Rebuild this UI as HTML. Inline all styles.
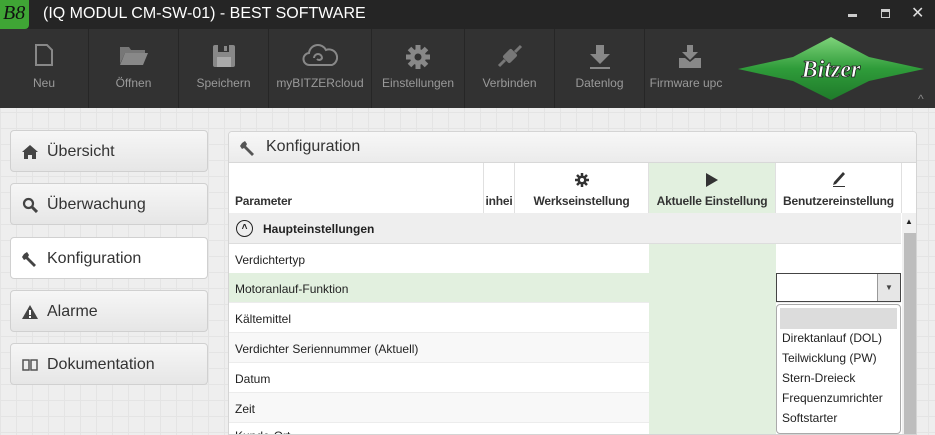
<!DOCTYPE html>
<html><head><meta charset="utf-8"><style>
*{box-sizing:border-box;margin:0;padding:0}
body{width:935px;height:435px;overflow:hidden;font-family:"Liberation Sans",sans-serif;background:#eeeeee;position:relative;
background-image:linear-gradient(#e4e4e4 1px,transparent 1px),linear-gradient(90deg,#e4e4e4 1px,transparent 1px);background-size:16px 16px;}
.abs{position:absolute}
#title{left:0;top:0;width:935px;height:29px;background:#252525;color:#fff;font-size:16px}
#tb{left:0;top:29px;width:935px;height:79px;background:#323232}
.tbtn{position:absolute;top:0;height:79px;border-right:1px solid #262626;color:#9a9a9a;font-size:12px;text-align:center}
.tbtn span{position:absolute;left:0;right:0;top:47px;white-space:nowrap;overflow:hidden}
.tbtn svg{position:absolute;left:50%;top:15px;transform:translateX(-50%)}
.side{position:absolute;left:10px;width:198px;height:42px;border:1px solid #d0d0d0;border-radius:4px;background:linear-gradient(#f6f6f6,#e6e6e6);font-size:16px;color:#333;padding:12px 0 0 36px}
.side svg{position:absolute;left:11px;top:13px}
#panel{left:228px;top:131px;width:689px;height:304px;background:#fff;border:1px solid #d4d4d4;border-radius:4px 4px 0 0;overflow:hidden}
.hdr{font-weight:bold;font-size:12px;color:#333;position:absolute;top:31px;height:50px;border-right:1px solid #e0e0e0;letter-spacing:-0.2px}
.hdr span{position:absolute;bottom:5px;left:0;right:0;text-align:center;white-space:nowrap;overflow:hidden}
.row{position:absolute;left:0;width:672px;height:30px;border-bottom:1px solid #ececec;font-size:12px;color:#222;padding:9px 0 0 6px}
</style></head><body>
<div id="title" class="abs">
 <div class="abs" style="left:0;top:0;width:29px;height:29px;background:#3fa535;border-radius:0 0 4px 0;color:#111;font-family:'Liberation Serif',serif;font-style:italic;font-size:20px;padding:2px 0 0 3px">B8</div>
 <div class="abs" style="left:43px;top:5px">(IQ MODUL CM-SW-01) - BEST SOFTWARE</div>
 <div class="abs" style="left:848px;top:14px;width:9px;height:3px;background:#ccc"></div>
 <div class="abs" style="left:881px;top:9px;width:9px;height:9px;border:1px solid #ccc;border-top-width:3px"></div>
 <div class="abs" style="left:911px;top:3px;color:#ddd;font-size:16px">✕</div>
</div>
<div id="tb" class="abs">
 <div class="tbtn" style="left:0;width:89px"><svg width="20" height="22"><path d="M2 1h11l5 5v15H2z" fill="none" stroke="#888" stroke-width="2"/></svg><span>Neu</span></div>
 <div class="tbtn" style="left:89px;width:90px"><svg width="30" height="22"><path d="M1 3h9l2 3h14v3H6L1 20z" fill="#777"/><path d="M6 9h23l-5 12H1z" fill="#888"/></svg><span>Öffnen</span></div>
 <div class="tbtn" style="left:179px;width:90px"><svg width="24" height="24"><rect x="1" y="1" width="22" height="22" rx="2" fill="#888"/><rect x="6" y="1" width="11" height="7" fill="#323232"/><rect x="12" y="2" width="3" height="5" fill="#888"/><rect x="5" y="13" width="14" height="10" fill="#aaa"/></svg><span>Speichern</span></div>
 <div class="tbtn" style="left:269px;width:103px"><svg width="36" height="24"><path d="M8 21a6 6 0 0 1-1-12a9 9 0 0 1 17-3a7 7 0 0 1 6 15z" fill="none" stroke="#888" stroke-width="2"/><path d="M12 14a4 4 0 1 1 8 0a3 3 0 0 1-5 1" fill="none" stroke="#888" stroke-width="2"/></svg><span>myBITZERcloud</span></div>
 <div class="tbtn" style="left:372px;width:93px"><svg width="26" height="26"><circle cx="13" cy="13" r="8" fill="#888"/><path d="M13 1v24M1 13h24M4.5 4.5l17 17M21.5 4.5l-17 17" stroke="#888" stroke-width="5"/><circle cx="13" cy="13" r="3.5" fill="#323232"/></svg><span>Einstellungen</span></div>
 <div class="tbtn" style="left:465px;width:90px"><svg width="26" height="24"><path d="M2 22l6-6M24 2l-6 6" stroke="#777" stroke-width="3"/><rect x="7" y="7" width="12" height="10" rx="2" transform="rotate(-45 13 12)" fill="#777"/></svg><span>Verbinden</span></div>
 <div class="tbtn" style="left:555px;width:90px"><svg width="26" height="26"><path d="M9 1h8v9h6l-10 10L3 10h6z" fill="#888"/><rect x="3" y="23" width="20" height="2" fill="#888"/></svg><span>Datenlog</span></div>
 <div class="tbtn" style="left:645px;width:90px;border:none"><svg width="26" height="26"><path d="M10 1h6v7h5l-8 8-8-8h5z" fill="#888"/><path d="M2 14h6l5 4 5-4h6v10H2z" fill="#888"/></svg><span style="right:8px">Firmware upc</span></div>
 <svg class="abs" style="left:738px;top:8px" width="186" height="63"><defs><linearGradient id="g" x1="0" y1="0" x2="0" y2="1"><stop offset="0" stop-color="#7ed37a"/><stop offset="0.5" stop-color="#2f9c3a"/><stop offset="1" stop-color="#1f7a2a"/></linearGradient></defs><polygon points="0,32 55,20 93,0 131,20 186,32 131,44 93,63 55,44" fill="url(#g)"/><text x="93" y="40" text-anchor="middle" font-family="Liberation Serif" font-style="italic" font-weight="bold" font-size="24" fill="#fff" stroke="#222" stroke-width="0.8">Bitzer</text></svg>
 <div class="abs" style="left:918px;top:63px;color:#888;font-size:12px">^</div>
</div>
<div class="side" style="top:130px"><svg width="16" height="16"><path d="M8 1L0 8h2v7h4v-4h4v4h4V8h2z" fill="#444"/></svg>Übersicht</div>
<div class="side" style="top:183px"><svg width="16" height="16"><circle cx="6.5" cy="6.5" r="4.5" fill="none" stroke="#444" stroke-width="2.2"/><path d="M10 10l5 5" stroke="#444" stroke-width="3"/></svg>Überwachung</div>
<div class="side" style="top:237px;background:#fff"><svg width="16" height="16"><path d="M2 3l3-2 2 3-1 2 8 8-2 2-8-8-2 1-2-3z" fill="#444"/></svg>Konfiguration</div>
<div class="side" style="top:290px"><svg width="16" height="16"><path d="M8 1L0 15h16z" fill="#444"/><rect x="7" y="6" width="2" height="5" fill="#fff"/><rect x="7" y="12" width="2" height="2" fill="#fff"/></svg>Alarme</div>
<div class="side" style="top:343px"><svg width="16" height="16"><path d="M1 3h6v10H1zM9 3h6v10H9z" fill="none" stroke="#555" stroke-width="1.5"/></svg>Dokumentation</div>
<div id="panel" class="abs">
 <div class="abs" style="left:0;top:0;width:689px;height:31px;background:linear-gradient(#f7f7f7,#ebebeb);border-bottom:1px solid #d8d8d8;font-size:16px;color:#333;padding:6px 0 0 37px">Konfiguration
  <svg class="abs" style="left:11px;top:8px" width="16" height="16"><path d="M2 3l3-2 2 3-1 2 8 8-2 2-8-8-2 1-2-3z" fill="#555"/></svg></div>
 <div class="hdr" style="left:0;width:255px"><span style="text-align:left;padding-left:6px">Parameter</span></div>
 <div class="hdr" style="left:255px;width:31px"><span>inhei</span></div>
 <div class="hdr" style="left:286px;width:134px"><svg class="abs" style="left:60px;top:10px" width="14" height="14"><circle cx="7" cy="7" r="4.5" fill="#333"/><path d="M7 0v14M0 7h14M2 2l10 10M12 2L2 12" stroke="#333" stroke-width="2.5"/><circle cx="7" cy="7" r="2" fill="#fff"/></svg><span>Werkseinstellung</span></div>
 <div class="hdr" style="left:420px;width:127px;background:#e2f0df"><svg class="abs" style="left:56px;top:10px" width="14" height="14"><path d="M1 0l12 7-12 7z" fill="#333"/></svg><span>Aktuelle Einstellung</span></div>
 <div class="hdr" style="left:547px;width:126px"><svg class="abs" style="left:54px;top:6px" width="18" height="18"><path d="M4 13l9-10 2 2-9 10-3 1z" fill="#333"/><rect x="3" y="17" width="12" height="1.5" fill="#333"/></svg><span>Benutzereinstellung</span></div>
 <div class="row" style="top:81px;background:#eeeeee;font-weight:bold;padding-left:34px;height:31px;border-bottom:1px solid #ddd">Haupteinstellungen
  <div class="abs" style="left:7px;top:7px;width:17px;height:17px;border:1.5px solid #222;border-radius:50%;font-size:10px;text-align:center;line-height:14px">˄</div></div>
 <div class="row" style="top:112px">Verdichtertyp</div>
 <div class="row" style="top:141px;background:#e2f0df">Motoranlauf-Funktion</div>
 <div class="row" style="top:171px">Kältemittel</div>
 <div class="row" style="top:201px;background:#f8f8f8">Verdichter Seriennummer (Aktuell)</div>
 <div class="row" style="top:231px">Datum</div>
 <div class="row" style="top:261px;background:#f8f8f8">Zeit</div>
 <div class="row" style="top:291px;padding-top:6px">Kunde-Ort</div>
 <div class="abs" style="left:420px;top:112px;width:127px;height:192px;background:#e2f0df"></div>
 <div class="abs" style="left:547px;top:141px;width:125px;height:29px;background:#fff;border:1px solid #444">
  <div class="abs" style="right:0;top:0;width:23px;height:27px;background:#e6e6e6;border-left:1px solid #999;font-size:8px;text-align:center;line-height:27px;color:#444">▼</div></div>
 <div class="abs" style="left:547px;top:172px;width:125px;height:130px;background:#fff;border:1px solid #aaa;border-radius:4px;font-size:12px;color:#222;padding:3px 3px">
  <div style="height:21px;background:#dcdcdc;margin-bottom:2px"></div>
  <div style="height:20px;padding-left:2px">Direktanlauf (DOL)</div>
  <div style="height:20px;padding-left:2px">Teilwicklung (PW)</div>
  <div style="height:20px;padding-left:2px">Stern-Dreieck</div>
  <div style="height:20px;padding-left:2px">Frequenzumrichter</div>
  <div style="height:20px;padding-left:2px">Softstarter</div>
 </div>
 <div class="abs" style="left:673px;top:81px;width:16px;height:223px;background:#f0f0f0"><div class="abs" style="left:3px;top:4px;font-size:8px;color:#222">▲</div><div class="abs" style="left:2px;top:20px;width:12px;height:203px;background:#bdbdbd"></div></div>
</div>
</body></html>
